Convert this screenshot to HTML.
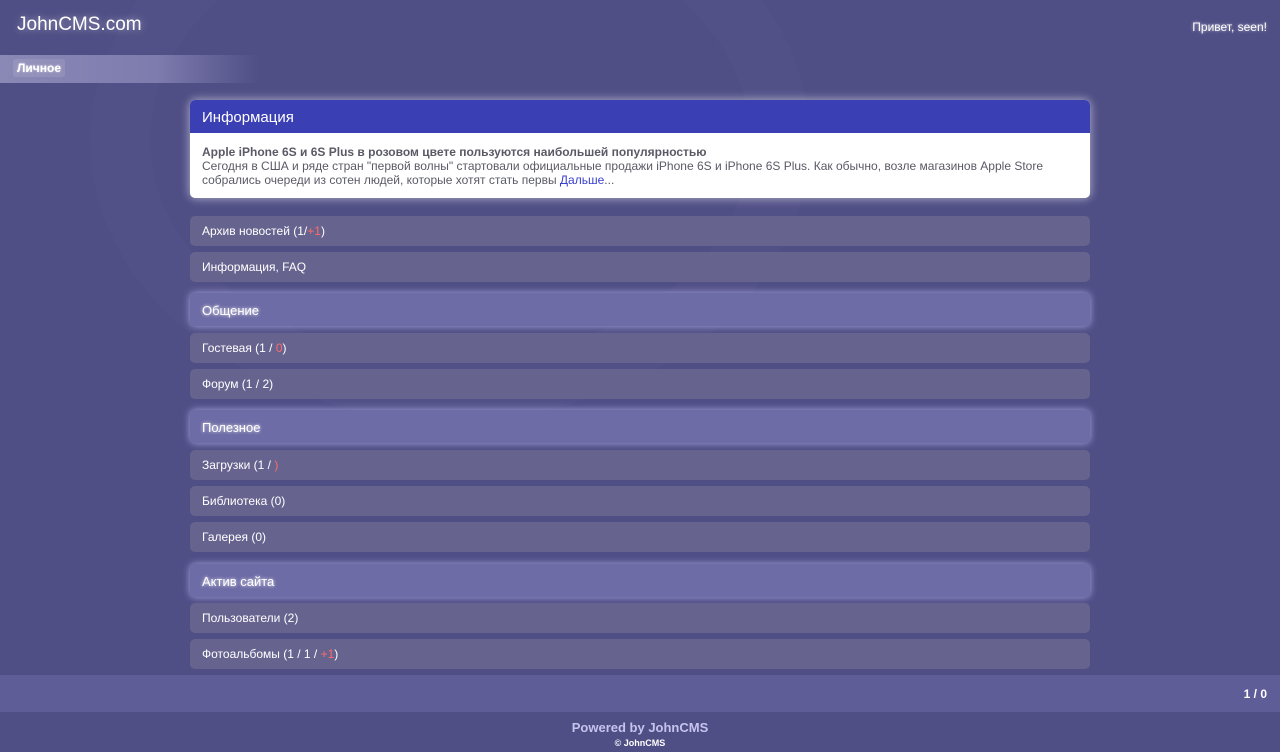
<!DOCTYPE html>
<html><head><meta charset="utf-8"><style>
*{margin:0;padding:0;box-sizing:border-box}
body{width:1280px;height:752px;background:#4f4e85;font-family:"Liberation Sans",sans-serif;position:relative;overflow:hidden;color:#fff}
.abs{position:absolute}
.logo{left:17px;top:14px;font-size:19px;text-shadow:0 0 8px #fff8}
.hi{right:13px;top:20px;font-size:12px;text-shadow:0 0 3px #fffa}
.nav{left:0;top:55px;width:260px;height:28px;background:linear-gradient(90deg,#8a88b5 0,#7e7cae 60%,rgba(126,124,174,0) 100%)}
.nav span{position:absolute;left:13px;top:4px;padding:2px 4px;font-size:12px;font-weight:bold;background:rgba(255,255,255,.1);border-radius:3px;text-shadow:0 0 2px #fffa}
.card{left:190px;width:900px;border-radius:5px}
.info{top:100px;height:98px;background:#fff;box-shadow:0 0 10px #fff9;overflow:hidden}
.info .h{background:#3a3fb4;height:33px;padding:9px 12px;font-size:15px}
.info .b{padding:12px 12px;font-size:12px;color:#5a5a66;line-height:14px}
.row{height:30px;background:#66638f;font-size:12px;padding:8px 12px}
.hd{height:33px;background:#6e6ca6;font-size:13px;padding:10px 12px;box-shadow:0 0 8px #a9a7e0;text-shadow:0 0 3px #fff}
.r{color:#ff6b6b}
.foot{left:0;top:675px;width:1280px;height:37px;background:#5e5d98;font-size:12px;font-weight:bold;text-align:right;padding:12px 13px}
.pw{left:0;width:1280px;text-align:center;top:720px;font-size:13px;font-weight:bold;color:#c6c4ee}
.cp{left:0;width:1280px;text-align:center;top:738px;font-size:9px;font-weight:bold}
.deco{left:90px;top:-140px;width:720px;height:560px;border-radius:50%;border:60px solid rgba(255,255,255,.02)}
</style></head><body>
<div class="abs deco"></div>
<div class="abs logo">JohnCMS.com</div>
<div class="abs hi">Привет, seen!</div>
<div class="abs nav"><span>Личное</span></div>
<div class="abs card info"><div class="h">Информация</div><div class="b"><b>Apple iPhone 6S и 6S Plus в розовом цвете пользуются наибольшей популярностью</b><br>Сегодня в США и ряде стран "первой волны" стартовали официальные продажи iPhone 6S и iPhone 6S Plus. Как обычно, возле магазинов Apple Store собрались очереди из сотен людей, которые хотят стать первы <span style="color:#3a3fcc">Дальше</span>...</div></div>
<div class="abs card row" style="top:216px">Архив новостей (1/<span class="r">+1</span>)</div>
<div class="abs card row" style="top:252px">Информация, FAQ</div>
<div class="abs card hd" style="top:293px">Общение</div>
<div class="abs card row" style="top:333px">Гостевая (1 / <span class="r">0</span>)</div>
<div class="abs card row" style="top:369px">Форум (1 / 2)</div>
<div class="abs card hd" style="top:410px">Полезное</div>
<div class="abs card row" style="top:450px">Загрузки (1 / <span class="r">)</span></div>
<div class="abs card row" style="top:486px">Библиотека (0)</div>
<div class="abs card row" style="top:522px">Галерея (0)</div>
<div class="abs card hd" style="top:564px">Актив сайта</div>
<div class="abs card row" style="top:603px">Пользователи (2)</div>
<div class="abs card row" style="top:639px">Фотоальбомы (1 / 1 / <span class="r">+1</span>)</div>
<div class="abs foot">1 / 0</div>
<div class="abs pw">Powered by JohnCMS</div>
<div class="abs cp">© JohnCMS</div>
</body></html>
